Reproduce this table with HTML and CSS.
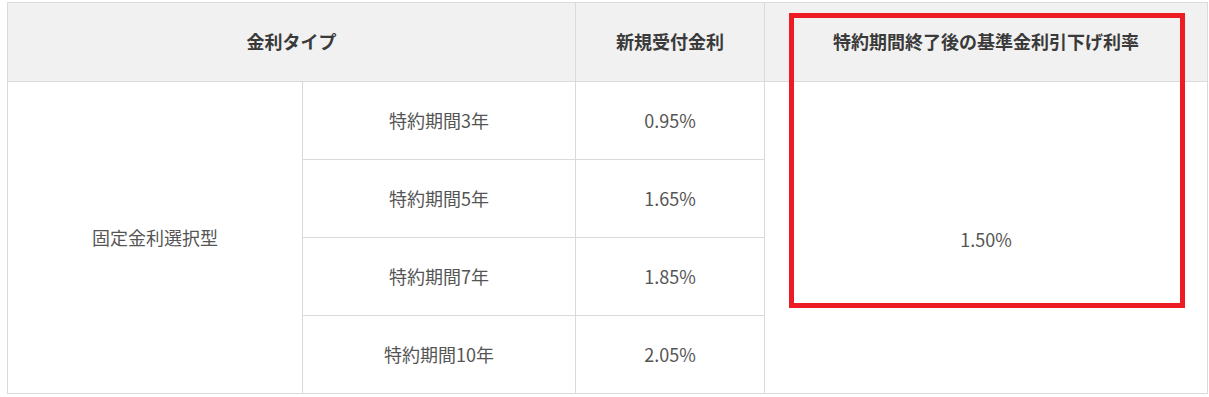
FILE: index.html
```html
<!DOCTYPE html>
<html lang="ja">
<head>
<meta charset="utf-8">
<link rel="stylesheet" href="styles.css">
</head>
<body>
<div class="wrap">
  <table class="rates">
    <colgroup>
      <col class="c1"><col class="c2"><col class="c3"><col class="c4">
    </colgroup>
    <thead>
      <tr>
        <th colspan="2">金利タイプ</th>
        <th>新規受付金利</th>
        <th>特約期間終了後の基準金利引下げ利率</th>
      </tr>
    </thead>
    <tbody>
      <tr>
        <td rowspan="4">固定金利選択型</td>
        <td>特約期間3年</td>
        <td>0.95%</td>
        <td rowspan="4" class="last"><span class="mid">1.50%</span></td>
      </tr>
      <tr><td>特約期間5年</td><td>1.65%</td></tr>
      <tr><td>特約期間7年</td><td>1.85%</td></tr>
      <tr><td>特約期間10年</td><td>2.05%</td></tr>
    </tbody>
  </table>
  <div class="highlight"></div>
</div>
</body>
</html>
```
FILE: styles.css
```css
html, body {
  margin: 0;
  padding: 0;
  background: #fff;
}
.wrap {
  position: relative;
  padding: 2px 0 0 7px;
  font-family: "Noto Sans CJK JP", "Noto Sans", sans-serif;
}
.rates {
  border-collapse: collapse;
  table-layout: fixed;
  width: 1200px;
}
.c1 { width: 295px; }
.c2 { width: 273px; }
.c3 { width: 189px; }
.c4 { width: 443px; }
.rates th,
.rates td {
  border: 1px solid #dadada;
  text-align: center;
  vertical-align: middle;
  padding: 0;
  font-size: 18px;
  line-height: 1.4;
}
.rates th {
  background: #f1f1f1;
  color: #3a3a3a;
  font-weight: 700;
  height: 78px;
}
.rates td {
  color: #555;
  font-weight: 400;
  height: 77px;
}
.rates td.last {
  vertical-align: top;
}
.mid {
  display: block;
  padding-top: 145px;
}
.highlight {
  position: absolute;
  left: 789px;
  top: 13px;
  width: 386px;
  height: 285px;
  border: 5px solid #ed1c24;
}
```
